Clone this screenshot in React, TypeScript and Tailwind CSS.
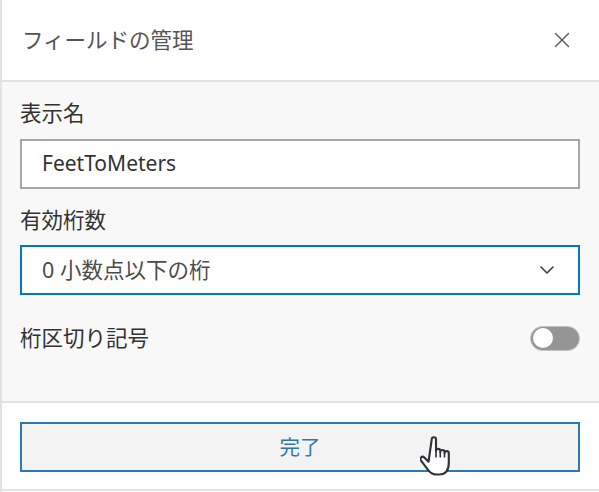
import { X, ChevronDown } from "lucide-react";

function HandCursor() {
  return (
    <svg
      width="32"
      height="44"
      viewBox="0 0 30 41"
      className="absolute left-[418px] top-[436px] pointer-events-none"
    >
      <path
        d="M11 3a2 2 0 0 1 4 0v11a2 2 0 0 1 4 0v1a2 2 0 0 1 4 0v1a2 2 0 0 1 4 0v9c0 7-3 11-9 11h-3c-4 0-6-2-8-5l-6-8a2 2 0 0 1 3-3l4 4z"
        fill="#ffffff"
        stroke="#2f3338"
        strokeWidth="2"
        strokeLinejoin="round"
      />
      <path d="M15 14v6M19 15v5M23 16v4" stroke="#2f3338" strokeWidth="1.5" />
    </svg>
  );
}

export default function App() {
  return (
    <div className="relative w-[599px] h-[492px] bg-white border-l-2 border-[#e2e2e2] flex flex-col font-['Noto_Sans','Noto_Sans_CJK_JP',sans-serif]">
      {/* header */}
      <div className="h-[82px] shrink-0 flex items-center justify-between pl-[20px] pr-[24px] border-b-2 border-[#e2e2e2] bg-white">
        <span className="text-[21.5px] leading-[30px] text-[#555555]">フィールドの管理</span>
        <X className="w-[26px] h-[26px] text-[#5a5a5a]" strokeWidth={1.3} />
      </div>

      {/* body */}
      <div className="h-[319px] shrink-0 bg-[#f8f8f8] pl-[18px] pr-[19px] pt-[16px] flex flex-col">
        <label className="text-[21.5px] leading-[30px] text-[#323232]">表示名</label>
        <div className="mt-[11px] h-[50px] border-2 border-[#a6a6a6] bg-white px-[20px] flex items-center text-[21px] text-[#323232]">
          FeetToMeters
        </div>

        <label className="mt-[16px] text-[21.5px] leading-[30px] text-[#323232]">有効桁数</label>
        <div className="mt-[10px] h-[50px] border-2 border-[#0079c1] bg-white pl-[20px] pr-[19px] flex items-center justify-between text-[21.5px] text-[#4c4c4c]">
          <span>0 小数点以下の桁</span>
          <ChevronDown className="w-[24px] h-[24px] text-[#3c3c3c]" strokeWidth={1.6} />
        </div>

        <div className="mt-[28px] h-[30px] flex items-center justify-between">
          <span className="text-[21.5px] leading-[30px] text-[#323232]">桁区切り記号</span>
          <div className="w-[50px] h-[25px] rounded-full bg-[#959595] border border-[#c4c4c4] flex items-center pl-[2px]">
            <div className="w-[20px] h-[20px] rounded-full bg-white" />
          </div>
        </div>
      </div>

      {/* footer */}
      <div className="h-[90px] shrink-0 bg-white border-t-2 border-b-2 border-[#e2e2e2] pl-[18px] pr-[19px] pt-[19px]">
        <button className="w-full h-[50px] border-2 border-[#2e78b2] bg-[#f3f3f3] text-[20.5px] text-[#2e78b2] flex items-center justify-center">
          完了
        </button>
      </div>

      <HandCursor />
    </div>
  );
}
